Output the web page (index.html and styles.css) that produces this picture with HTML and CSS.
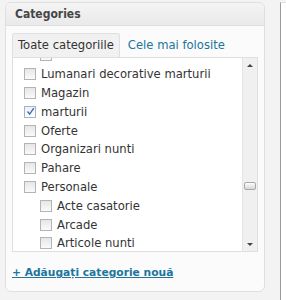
FILE: index.html
```html
<!doctype html>
<html lang="ro">
    <head>
        <title>Categories</title>
        <link rel="stylesheet" href="styles.css">
    </head>
    <body>
        <div class="postbox">
            <h3 class="hndle">Categories</h3>
            <div class="inside">
                <ul class="tabs">
                    <li class="tab active">Toate categoriile</li>
                    <li class="tab"><a href="#">Cele mai folosite</a></li>
                </ul>
                <div class="panel">
                    <ul class="checklist">
                        <li class="child"><span class="box"></span></li>
                        <li><span class="box"></span>Lumanari decorative marturii</li>
                        <li><span class="box"></span>Magazin</li>
                        <li>
                            <span class="box checked">
                                <svg width="9" height="9" viewBox="0 0 9 9"><path d="M1.5 4.5 L3.7 7.2 L7.8 1.2" fill="none" stroke="#3d6fb6" stroke-width="1.4"/></svg>
                            </span>marturii
                        </li>
                        <li><span class="box"></span>Oferte</li>
                        <li><span class="box"></span>Organizari nunti</li>
                        <li><span class="box"></span>Pahare</li>
                        <li><span class="box"></span>Personale</li>
                        <li class="child"><span class="box"></span>Acte casatorie</li>
                        <li class="child"><span class="box"></span>Arcade</li>
                        <li class="child"><span class="box"></span>Articole nunti</li>
                    </ul>
                    <div class="scrollbar">
                        <span class="arrow up"></span>
                        <span class="track"><span class="thumb"></span></span>
                        <span class="arrow down"></span>
                    </div>
                </div>
                <a class="add-new" href="#">+ Adăugați categorie nouă</a>
            </div>
        </div>
        <div class="side"></div>
    </body>
</html>
```

FILE: styles.css
```css
body {
    margin: 0;
    height: 300px;
    overflow: hidden;
    display: flex;
    background: #f3f3f3;
    font-family: "DejaVu Sans", Verdana, sans-serif;
    font-size: 11px;
    color: #333;
}

.postbox {
    margin: 2px 0 0 5px;
    width: 258px;
    height: 288px;
    border: 1px solid #dfdfdf;
    border-radius: 6px;
    background: #fbfbfb;
    overflow: hidden;
}

.hndle {
    margin: 0;
    height: 22px;
    line-height: 22px;
    padding-left: 9px;
    font-family: "DejaVu Sans Condensed", "DejaVu Sans", sans-serif;
    font-stretch: condensed;
    font-size: 12px;
    font-weight: bold;
    color: #464646;
    background: linear-gradient(#f4f4f4, #e9e9e9);
    border-bottom: 1px solid #dfdfdf;
}

.inside {
    padding: 7px 6px 0 6px;
}

.tabs {
    list-style: none;
    margin: 0;
    padding: 0;
    display: flex;
    height: 24px;
}

.tab {
    padding: 0 5px;
    line-height: 23px;
    font-size: 11.6px;
    border: 1px solid transparent;
    border-bottom: none;
    border-radius: 3px 3px 0 0;
}

.tab.active {
    background: #f1f1f1;
    border-color: #dfdfdf;
    color: #333;
}

.tab a {
    color: #21759b;
    text-decoration: none;
    padding-left: 2px;
}

.panel {
    display: flex;
    height: 193px;
    border: 1px solid #dfdfdf;
    background: #fff;
    overflow: hidden;
}

.checklist {
    flex: 1;
    list-style: none;
    margin: -12px 0 0 0;
    padding: 0 0 0 11px;
}

.checklist li {
    height: 18.8px;
    display: flex;
    align-items: center;
    font-size: 11.6px;
    color: #333;
}

.checklist li.child {
    padding-left: 16px;
}

.box {
    width: 10px;
    height: 10px;
    margin-right: 5px;
    border: 1px solid #b4b4b4;
    background: linear-gradient(#e6e6e6, #fafafa);
    display: flex;
    align-items: center;
    justify-content: center;
}

.box.checked {
    background: linear-gradient(#eef1f6, #fff);
    border-color: #a9b2c2;
}

.scrollbar {
    width: 14px;
    display: flex;
    flex-direction: column;
    background: #f0f0f0;
    border-left: 1px solid #e4e4e4;
}

.arrow {
    height: 14px;
    display: flex;
    align-items: center;
    justify-content: center;
}

.arrow::after {
    content: "";
    border-left: 3px solid transparent;
    border-right: 3px solid transparent;
}

.arrow.up::after {
    border-bottom: 3px solid #444;
}

.arrow.down::after {
    border-top: 3px solid #444;
}

.track {
    flex: 1;
    display: flex;
    flex-direction: column;
    justify-content: center;
    padding-top: 62px;
}

.thumb {
    height: 6px;
    margin: 0 1px;
    border: 1px solid #a8a8a8;
    border-radius: 2px;
    background: linear-gradient(#fdfdfd, #d6d6d6);
}

.add-new {
    display: inline-block;
    margin-top: 14px;
    font-size: 10.7px;
    font-weight: bold;
    color: #21759b;
}

.side {
    margin: 2px 0 0 15px;
    flex: 1;
    border-left: 1px solid #9a9a9a;
    border-top: 1px solid #e0e0e0;
    background: #fff;
}
```
